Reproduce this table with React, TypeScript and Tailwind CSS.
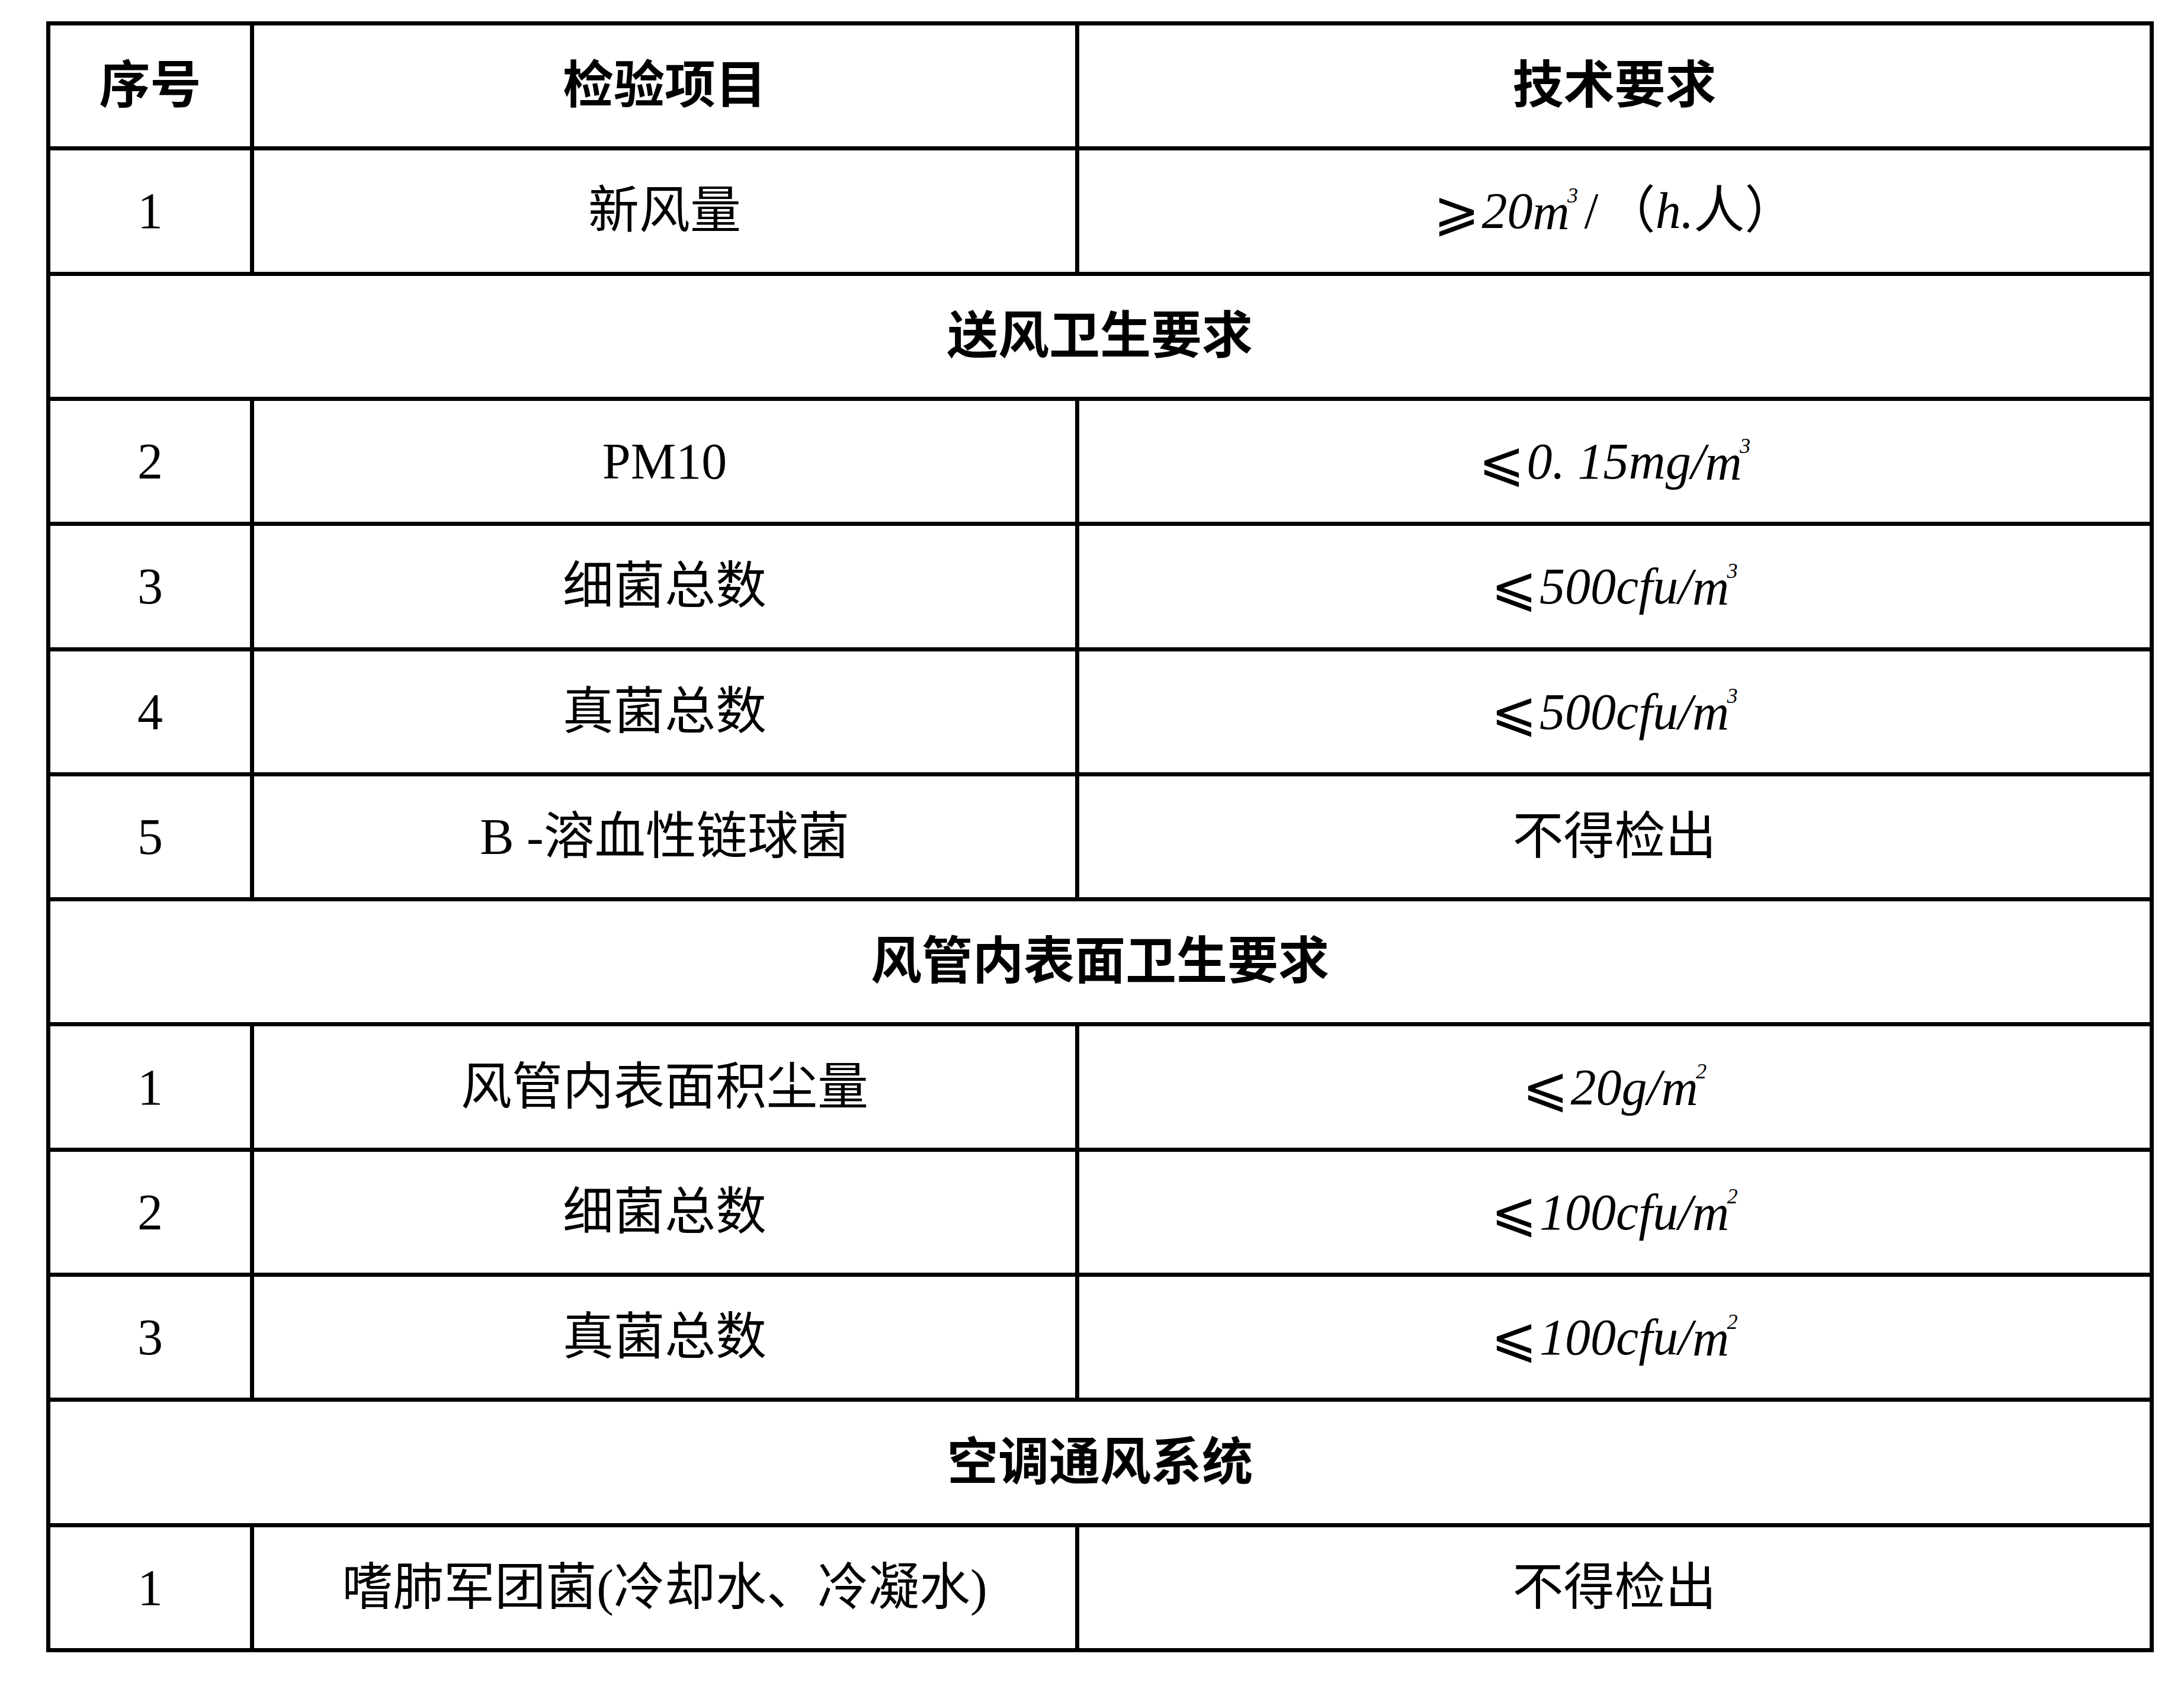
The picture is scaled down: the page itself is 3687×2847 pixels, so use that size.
import type { ReactNode } from 'react';

const serif = 'font-["Liberation_Serif","DejaVu_Serif","Noto_Sans_CJK_SC",serif]';

function I({ children }: { children: ReactNode }) {
  return <span className="italic">{children}</span>;
}

// m² / m³ with the small index tucked over the m
function Unit({ m, p }: { m: string; p: string }) {
  return (
    <span className="italic">
      {m}
      <span className="-ml-[0.1em] align-[1.25em] text-[0.42em]">{p}</span>
    </span>
  );
}

function Op({ c }: { c: string }) {
  return (
    <span className='mr-[0.04em] font-["DejaVu_Sans","Noto_Sans_CJK_SC",sans-serif] text-[1.08em] font-extralight'>
      {c}
    </span>
  );
}

type Row =
  | { kind: 'section'; title: string }
  | { kind: 'item'; no: string; item: ReactNode; req: ReactNode };

const rows: Row[] = [
  {
    kind: 'item',
    no: '1',
    item: '新风量',
    req: (
      <>
        <Op c="⩾" />
        <I>20</I>
        <Unit m="m" p="3" />
        <span className="mx-[0.12em]">/</span>（<I>h.</I> 人）
      </>
    ),
  },
  { kind: 'section', title: '送风卫生要求' },
  {
    kind: 'item',
    no: '2',
    item: 'PM10',
    req: (
      <>
        <Op c="⩽" />
        <I>0. 15mg/</I>
        <Unit m="m" p="3" />
      </>
    ),
  },
  {
    kind: 'item',
    no: '3',
    item: '细菌总数',
    req: (
      <>
        <Op c="⩽" />
        <I>500cfu/</I>
        <Unit m="m" p="3" />
      </>
    ),
  },
  {
    kind: 'item',
    no: '4',
    item: '真菌总数',
    req: (
      <>
        <Op c="⩽" />
        <I>500cfu/</I>
        <Unit m="m" p="3" />
      </>
    ),
  },
  { kind: 'item', no: '5', item: 'B -溶血性链球菌', req: '不得检出' },
  { kind: 'section', title: '风管内表面卫生要求' },
  {
    kind: 'item',
    no: '1',
    item: '风管内表面积尘量',
    req: (
      <>
        <Op c="⩽" />
        <I>20g/</I>
        <Unit m="m" p="2" />
      </>
    ),
  },
  {
    kind: 'item',
    no: '2',
    item: '细菌总数',
    req: (
      <>
        <Op c="⩽" />
        <I>100cfu/</I>
        <Unit m="m" p="2" />
      </>
    ),
  },
  {
    kind: 'item',
    no: '3',
    item: '真菌总数',
    req: (
      <>
        <Op c="⩽" />
        <I>100cfu/</I>
        <Unit m="m" p="2" />
      </>
    ),
  },
  { kind: 'section', title: '空调通风系统' },
  { kind: 'item', no: '1', item: '嗜肺军团菌(冷却水、冷凝水)', req: '不得检出' },
];

function Cell({ children, className = '' }: { children: ReactNode; className?: string }) {
  return (
    <div className={`flex items-center justify-center whitespace-nowrap bg-white leading-none ${className}`}>
      {children}
    </div>
  );
}

export default function App() {
  return (
    <div className={`h-[2847px] w-[3687px] bg-white pl-[78px] pt-[36px] text-[86px] text-black ${serif}`}>
      <div className="grid h-[2754px] w-[3558px] grid-cols-[337px_1386px_1807px] grid-rows-[repeat(13,1fr)] gap-[7px] bg-black p-[7px]">
        <Cell className="font-bold">序号</Cell>
        <Cell className="font-bold">检验项目</Cell>
        <Cell className="font-bold">技术要求</Cell>
        {rows.map((row, i) =>
          row.kind === 'section' ? (
            <Cell key={i} className="col-span-3 font-bold">
              {row.title}
            </Cell>
          ) : (
            <div key={i} className="contents">
              <Cell>{row.no}</Cell>
              <Cell>{row.item}</Cell>
              <Cell>{row.req}</Cell>
            </div>
          ),
        )}
      </div>
    </div>
  );
}
